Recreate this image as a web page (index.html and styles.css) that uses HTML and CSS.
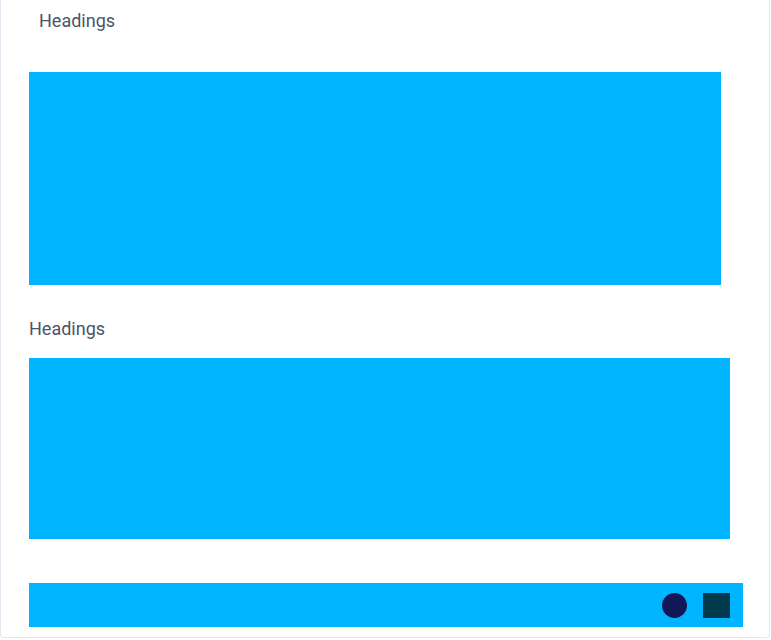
FILE: index.html
```html
<!DOCTYPE html>
<html>
<head>
<meta charset="utf-8">
<link rel="stylesheet" href="styles.css">
</head>
<body>
<div class="card">
  <h2 class="heading heading-first">Headings</h2>
  <div class="block block-one"></div>
  <h2 class="heading heading-second">Headings</h2>
  <div class="block block-two"></div>
  <div class="bar">
    <span class="dot"></span>
    <span class="square"></span>
  </div>
</div>
</body>
</html>
```
FILE: styles.css
```css
html, body {
  margin: 0;
  padding: 0;
  background: #ffffff;
}
.card {
  box-sizing: border-box;
  width: 770px;
  height: 638px;
  border: 1px solid #e2e8f0;
  border-top: none;
  border-radius: 0 0 4px 4px;
  padding: 9px 0 10px 28px;
  display: flex;
  flex-direction: column;
  align-items: flex-start;
  font-family: Roboto, "Noto Sans", sans-serif;
}
.heading {
  margin: 0;
  font-size: 18px;
  font-weight: 400;
  line-height: 24px;
  color: #4a5568;
}
.heading-first {
  padding-left: 10px;
}
.block {
  background: #00b4ff;
}
.block-one {
  margin-top: 39px;
  width: 692px;
  height: 213px;
}
.heading-second {
  margin-top: 32px;
}
.block-two {
  margin-top: 17px;
  width: 701px;
  height: 181px;
}
.bar {
  margin-top: 44px;
  box-sizing: border-box;
  width: 714px;
  height: 44px;
  background: #00b4ff;
  display: flex;
  justify-content: flex-end;
  align-items: center;
  gap: 16px;
  padding-right: 13px;
}
.dot {
  width: 25px;
  height: 25px;
  border-radius: 50%;
  background: #121857;
}
.square {
  width: 27px;
  height: 25px;
  background: #013a4d;
}
```
